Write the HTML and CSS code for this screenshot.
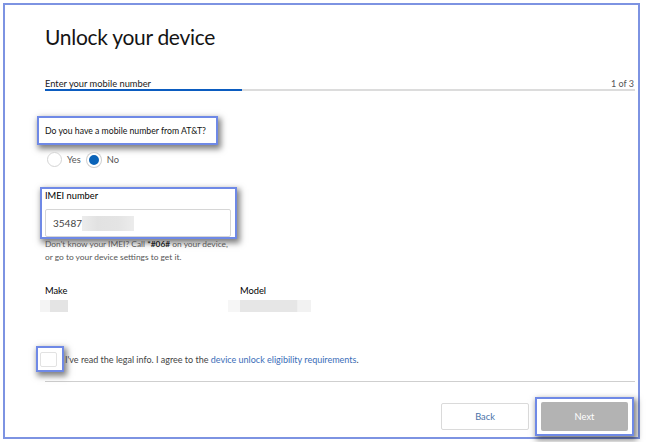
FILE: index.html
```html
<!DOCTYPE html>
<html>
<head>
<meta charset="utf-8">
<link rel="stylesheet" href="styles.css">
</head>
<body>
<div class="frame">
  <h1 class="title">Unlock your device</h1>
  <div class="step">
    <div class="step-head"><span class="step-name">Enter your mobile number</span><span class="count">1 of 3</span></div>
    <div class="track"><div class="fill"></div></div>
  </div>
  <div class="hl hl-q"><span>Do you have a mobile number from AT&amp;T?</span></div>
  <div class="radios">
    <span class="radio"><span class="dot"></span><span class="rlabel">Yes</span></span>
    <span class="radio"><span class="dot on"></span><span class="rlabel">No</span></span>
  </div>
  <div class="hl hl-imei">
    <div class="field-label">IMEI number</div>
    <div class="input"><span class="val">35487</span><span class="blur imei-blur"></span></div>
  </div>
  <p class="help">Don't know your IMEI? Call <b>*#06#</b> on your device,<br>or go to your device settings to get it.</p>
  <div class="specs">
    <div class="spec make">
      <div class="spec-label">Make</div>
      <div class="blur make-blur"></div>
    </div>
    <div class="spec model">
      <div class="spec-label">Model</div>
      <div class="blur model-blur"></div>
    </div>
  </div>
  <div class="agree">
    <div class="hl hl-check"><span class="box"></span></div>
    <span class="agree-text">I've read the legal info. I agree to the <a class="link">device unlock eligibility requirements</a>.</span>
  </div>
  <div class="divider"></div>
  <div class="actions">
    <button class="btn back">Back</button>
    <div class="hl hl-next"><button class="btn next">Next</button></div>
  </div>
</div>
</body>
</html>
```

FILE: styles.css
```css
* { box-sizing: border-box; }
html, body { margin: 0; padding: 0; background: #fff; }
body {
  font-family: Lato, "Open Sans", "Liberation Sans", sans-serif;
  color: #1f1f1f;
  width: 650px;
  height: 442px;
  overflow: hidden;
}
.frame {
  margin: 3px 0 0 3px;
  width: 637px;
  height: 436px;
  border: 2px solid #7d93e2;
  padding: 0 3px 0 40px;
}
.title {
  margin: 19px 0 0 0;
  font-size: 21px;
  line-height: 26px;
  font-weight: 400;
  color: #141414;
  letter-spacing: -0.3px;
  white-space: nowrap;
}
.step { margin-top: 28px; }
.step-head {
  display: flex;
  justify-content: space-between;
  font-size: 9.3px;
  line-height: 12px;
  color: #1a1a1a;
  white-space: nowrap;
}
.count { color: #555; font-size: 9px; padding-right: 1px; }
.track {
  margin-top: -1px;
  height: 2px;
  background: #dcdcdc;
}
.fill { width: 197px; height: 2px; background: #0b5cc0; }

.hl {
  border: 2px solid #6f89e6;
  box-shadow: 2px 3px 6px 1px rgba(0, 0, 0, 0.5);
  background: #fff;
}
.hl-q {
  display: block;
  margin: 25px 0 0 -8px;
  width: 181px;
  height: 29px;
  padding-left: 6px;
  font-size: 8.7px;
  line-height: 25px;
  color: #111;
  white-space: nowrap;
}
.radios {
  display: flex;
  align-items: center;
  margin-top: 7px;
  height: 15px;
  font-size: 9.3px;
  color: #555;
}
.radio { display: flex; align-items: center; }
.dot {
  width: 15px; height: 15px;
  border-radius: 50%;
  border: 1px solid #d4d4d4;
  background: #fff;
  margin-left: 2px;
}
.radio + .radio .dot { margin-left: 6px; }
.dot.on {
  background: #0a63b8;
  border: 2px solid #fff;
  box-shadow: 0 0 0 1px #cfcfcf;
  width: 14px; height: 14px;
}
.rlabel { margin-left: 5px; }
.radio + .radio .rlabel { margin-left: 6px; }

.hl-imei {
  margin: 20px 0 0 -5px;
  width: 197px;
  height: 52px;
  padding: 0 4px 0 3px;
}
.field-label {
  font-size: 9.3px;
  line-height: 14px;
  color: #000;
}
.input {
  margin-top: 6px;
  height: 28px;
  border: 1px solid #d6d6d6;
  border-radius: 2px;
  display: flex;
  align-items: center;
  padding-left: 7px;
  font-size: 10px;
  color: #444;
}
.blur { background: #e6e6e6; }
.imei-blur {
  width: 52px; height: 15px;
  background: linear-gradient(90deg, #ececec 0, #e2e2e2 30%, #e4e4e4 70%, #ececec 100%);
}
.help {
  margin: -1px 0 0 0;
  font-size: 8.4px;
  line-height: 13px;
  color: #555;
  white-space: nowrap;
}
.help b { color: #222; }
.specs { display: flex; margin-top: 21px; }
.spec-label { font-size: 9.3px; line-height: 12px; color: #000; }
.make { width: 195px; }
.make-blur {
  margin: 3px 0 0 -5px;
  width: 28px; height: 12px;
  background: linear-gradient(90deg, #f4f4f4 0, #f4f4f4 35%, #e4e4e4 36%, #e4e4e4 100%);
}
.model-blur {
  margin: 3px 0 0 -12px;
  width: 83px; height: 12px;
  background: linear-gradient(90deg, #f6f6f6 0, #f6f6f6 14%, #e6e6e6 15%, #e6e6e6 83%, #f2f2f2 84%, #f2f2f2 100%);
}
.agree {
  display: flex;
  align-items: center;
  margin: 34px 0 0 -9px;
  height: 26px;
}
.hl-check {
  width: 28px;
  height: 26px;
  padding: 4px 0 0 2px;
  flex-shrink: 0;
}
.box {
  display: block;
  width: 17px;
  height: 15px;
  border: 1px solid #e2e2e2;
  border-radius: 2px;
}
.agree-text {
  margin-left: 1px;
  font-size: 9px;
  color: #444;
  white-space: nowrap;
}
.link { color: #3a6db8; }
.divider {
  margin-top: 9px;
  height: 1px;
  background: #cfcfcf;
}
.actions {
  display: flex;
  justify-content: flex-end;
  align-items: center;
  margin-top: 15px;
  padding-right: 1px;
}
.btn {
  font-family: Lato, "Open Sans", "Liberation Sans", sans-serif;
  font-size: 9.3px;
  border-radius: 2px;
  padding: 0;
}
.back {
  width: 88px;
  height: 27px;
  background: #fff;
  border: 1px solid #dadada;
  color: #4a72a8;
  margin-right: 6px;
}
.hl-next { padding: 3px 4px; }
.next {
  display: block;
  width: 87px;
  height: 29px;
  background: #b3b3b3;
  border: none;
  color: #fff;
}
```
